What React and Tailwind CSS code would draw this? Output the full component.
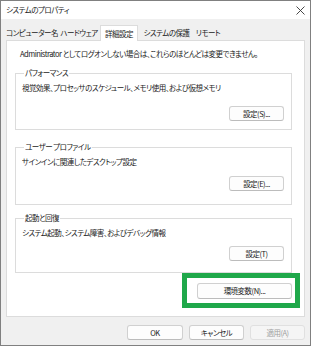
import React from 'react';

const font = "font-['Noto_Sans_CJK_JP','Noto_Sans',sans-serif] [font-feature-settings:'palt'] tracking-[-0.5px]";

const tabs = [
  { label: 'コンピューター名', w: 'w-[52px]' },
  { label: 'ハードウェア', w: 'w-[42px]' },
  { label: '詳細設定', w: 'w-[38px]', active: true },
  { label: 'システムの保護', w: 'w-[57px]' },
  { label: 'リモート', w: 'w-[26px]' },
];

const Button = ({ children, className = '', disabled }) => (
  <button
    className={`h-[15px] rounded-[3px] border text-[7.5px] leading-none ${
      disabled
        ? 'bg-[#f5f5f5] border-[#e0e0e0] text-[#a0a0a0]'
        : 'bg-[#fdfdfd] border-[#d0d0d0] border-b-[#bcbcbc] text-[#1a1a1a]'
    } ${className}`}
  >
    {children}
  </button>
);

const Group = ({ title, desc, button, className = '', btnGap, bottom }) => (
  <fieldset className={`border border-[#dcdcdc] px-[6px] ${bottom} ${className}`}>
    <legend className="ml-[2px] px-[1px] text-[7.5px] leading-[12px] text-[#1a1a1a]">{title}</legend>
    <p className="pt-[3px] text-[7.5px] leading-[12px] text-[#1a1a1a]">{desc}</p>
    <div className={`${btnGap} flex justify-end pr-[1px]`}>
      <Button className="w-[55px]">{button}</Button>
    </div>
  </fieldset>
);

export default function App() {
  return (
    <div className={`relative flex h-[346px] w-[311px] flex-col border border-[#808080] bg-[#f0f0f0] ${font}`}>
      {/* Title bar */}
      <div className="flex h-[18px] items-center justify-between bg-white pl-[5px] pr-[5px]">
        <span className="text-[7.5px] leading-none text-[#1a1a1a]">システムのプロパティ</span>
        <svg width="9" height="9" viewBox="0 0 9 9">
          <path d="M0.5 0.5 L8.5 8.5 M8.5 0.5 L0.5 8.5" stroke="#333" strokeWidth="0.9" />
        </svg>
      </div>

      {/* Tabs */}
      <div className="mt-[6px] flex pl-[5px]">
        {tabs.map((t) => (
          <div
            key={t.label}
            className={`${t.w} relative flex h-[15px] items-center justify-center whitespace-nowrap text-[7.5px] leading-none text-[#1a1a1a] ${
              t.active ? 'z-10 -mb-px h-[16px] border border-b-0 border-[#dcdcdc] bg-white' : ''
            }`}
          >
            {t.label}
          </div>
        ))}
      </div>

      {/* Panel */}
      <div className="mx-[5px] flex h-[277px] flex-col border border-[#dcdcdc] bg-white pl-[8px] pr-[12px]">
        <p className="ml-[5px] mt-[7px] whitespace-nowrap text-[7.5px] leading-[12px] text-[#1a1a1a]">
          Administrator としてログオンしない場合は、これらのほとんどは変更できません。
        </p>
        <Group
          className="mt-[7px]"
          btnGap="mt-[12px]"
          bottom="pb-[8px]"
          title="パフォーマンス"
          desc="視覚効果、プロセッサのスケジュール、メモリ使用、および仮想メモリ"
          button="設定(S)..."
        />
        <Group
          className="mt-[11px]"
          btnGap="mt-[8px]"
          bottom="pb-[13px]"
          title="ユーザー プロファイル"
          desc="サインインに関連したデスクトップ設定"
          button="設定(E)..."
        />
        <Group
          className="mt-[7px]"
          btnGap="mt-[7px]"
          bottom="pb-[11px]"
          title="起動と回復"
          desc="システム起動、システム障害、およびデバッグ情報"
          button="設定(T)"
        />
        <div className="mt-[10px] flex justify-end">
          <Button className="h-[16px] w-[95px]">環境変数(N)...</Button>
        </div>
      </div>

      {/* Bottom buttons */}
      <div className="mt-[8px] flex justify-end gap-[6px] pr-[5px]">
        <Button className="w-[56px]">OK</Button>
        <Button className="w-[55px]">キャンセル</Button>
        <Button className="w-[55px]" disabled>適用(A)</Button>
      </div>

      {/* Highlight annotation */}
      <div className="pointer-events-none absolute left-[181px] top-[272px] h-[35px] w-[118px] border-[5px] border-[#1fa84a]" />
    </div>
  );
}
